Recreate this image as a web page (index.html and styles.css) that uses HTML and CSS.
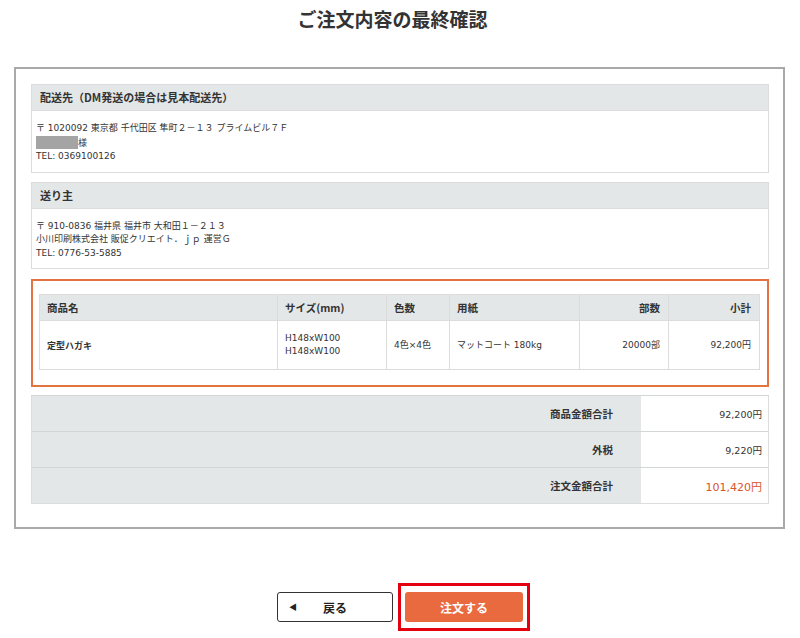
FILE: index.html
```html
<!DOCTYPE html>
<html lang="ja">
<head>
<meta charset="utf-8">
<title>ご注文内容の最終確認</title>
<link rel="stylesheet" href="styles.css">
</head>
<body>
<h1 class="title">ご注文内容の最終確認</h1>
<div class="panel">
  <section class="addr">
    <div class="addr-head">配送先（DM発送の場合は見本配送先）</div>
    <div class="addr-body">
      <div>〒 1020092 東京都 千代田区 隼町２－１３ プライムビル７Ｆ</div>
      <div><span class="redact"></span>様</div>
      <div>TEL: 0369100126</div>
    </div>
  </section>
  <section class="addr">
    <div class="addr-head">送り主</div>
    <div class="addr-body">
      <div>〒 910-0836 福井県 福井市 大和田１－２１３</div>
      <div>小川印刷株式会社 販促クリエイト．ｊｐ 運営Ｇ</div>
      <div>TEL: 0776-53-5885</div>
    </div>
  </section>
  <div class="order">
    <table class="items">
      <thead>
        <tr>
          <th class="c-name">商品名</th>
          <th class="c-size">サイズ(mm)</th>
          <th class="c-color">色数</th>
          <th class="c-paper">用紙</th>
          <th class="c-qty num">部数</th>
          <th class="c-sub num">小計</th>
        </tr>
      </thead>
      <tbody>
        <tr>
          <td class="prod">定型ハガキ</td>
          <td>H148xW100<br>H148xW100</td>
          <td>4色×4色</td>
          <td>マットコート 180kg</td>
          <td class="num">20000部</td>
          <td class="num">92,200円</td>
        </tr>
      </tbody>
    </table>
  </div>
  <table class="totals">
    <tr><th>商品金額合計</th><td>92,200円</td></tr>
    <tr><th>外税</th><td>9,220円</td></tr>
    <tr><th>注文金額合計</th><td class="grand">101,420円</td></tr>
  </table>
</div>
<div class="actions">
  <button class="btn btn-back" type="button"><span class="tri">◀</span>戻る</button>
  <button class="btn btn-order" type="button">注文する</button>
</div>
</body>
</html>
```
FILE: styles.css
```css
html, body {
  margin: 0;
  padding: 0;
  background: #fff;
}
body {
  font-family: "DejaVu Sans", "Noto Sans CJK JP", sans-serif;
  color: #333;
  width: 800px;
  min-height: 638px;
}
.title {
  margin: 0;
  padding: 7px 15px 0 0;
  height: 24px;
  line-height: 24px;
  text-align: center;
  font-family: "Noto Sans CJK JP", sans-serif;
  font-size: 19px;
  font-weight: 700;
  color: #333;
}
.panel {
  margin: 36px 15px 0 14px;
  border: 2px solid #a9a9a9;
  padding: 15px 14px 23px 15px;
}
.addr {
  border: 1px solid #dcdcdc;
}
.addr + .addr {
  margin-top: 9px;
}
.addr-head {
  height: 25px;
  line-height: 25px;
  padding: 0 8px;
  background: #e4e7e7;
  border-bottom: 1px solid #dcdcdc;
  font-family: "Noto Sans CJK JP", sans-serif;
  font-size: 11px;
  font-weight: 700;
}
.addr-body {
  padding: 11px 4px 8px;
  font-size: 9px;
  line-height: 13.5px;
}
.redact {
  display: inline-block;
  width: 42px;
  height: 13px;
  vertical-align: -3px;
  background: #a4a4a4;
}
.order {
  margin-top: 10px;
  border: 2px solid #e2743f;
  padding: 13px 7px 15px 6px;
}
.items {
  width: 100%;
  border-collapse: collapse;
  font-size: 9px;
}
.items th,
.items td {
  border: 1px solid #dcdcdc;
  text-align: left;
  padding: 0 7px;
}
.items th {
  height: 25px;
  background: #e4e7e7;
  font-family: "Noto Sans CJK JP", sans-serif;
  font-size: 10.5px;
  font-weight: 700;
}
.items td {
  height: 48px;
  line-height: 13px;
}
.items .num {
  text-align: right;
  padding-right: 8px;
}
.items .prod {
  font-family: "Noto Sans CJK JP", sans-serif;
  font-weight: 700;
}
.c-name { width: 223px; }
.c-size { width: 94px; }
.c-color { width: 48px; }
.c-paper { width: 115px; }
.c-qty { width: 73px; }
.totals {
  margin-top: 8px;
  width: 100%;
  border-collapse: collapse;
  border: 1px solid #dcdcdc;
  font-size: 9.5px;
}
.totals th,
.totals td {
  height: 35px;
  padding-top: 0;
  padding-bottom: 0;
  border-top: 1px solid #d2d6d6;
  text-align: right;
}
.totals th {
  background: #e4e7e7;
  padding-right: 28px;
  font-family: "Noto Sans CJK JP", sans-serif;
  font-size: 10.5px;
  font-weight: 700;
}
.totals td {
  width: 120px;
  background: #fff;
  padding-right: 6px;
}
.totals .grand {
  color: #d9562b;
  font-size: 11px;
}
.actions {
  margin-top: 63px;
  padding-bottom: 15px;
  display: flex;
  justify-content: center;
  gap: 12px;
}
.btn {
  position: relative;
  height: 30px;
  border-radius: 3px;
  font-family: "Noto Sans CJK JP", sans-serif;
  font-size: 12px;
  font-weight: 700;
  padding: 0;
  cursor: pointer;
}
.btn-back {
  width: 116px;
  background: #fff;
  border: 1px solid #333;
  color: #222;
}
.tri {
  position: absolute;
  left: 11px;
  top: 8px;
  font-size: 8px;
  line-height: 12px;
}
.btn-order {
  width: 118px;
  background: #ea6a40;
  border: none;
  color: #fff;
}
.btn-order::after {
  content: "";
  position: absolute;
  top: -9px;
  bottom: -9px;
  left: -7px;
  right: -7px;
  border: 3px solid #e3000f;
}
```
